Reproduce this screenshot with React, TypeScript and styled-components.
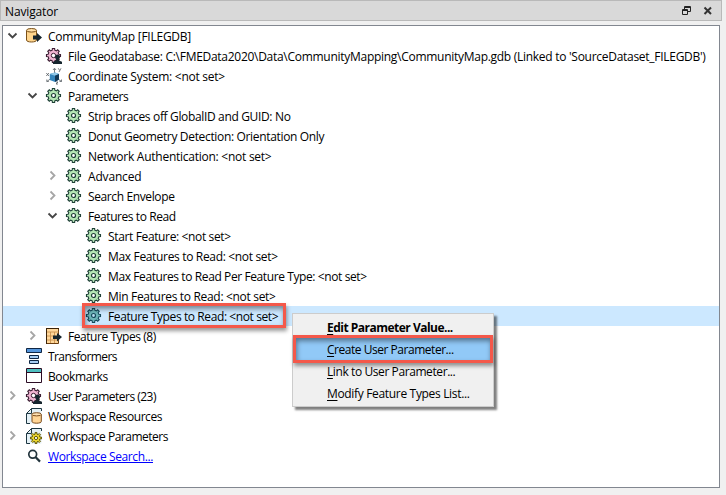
import React from "react";
import styled, { createGlobalStyle, css } from "styled-components";

const GlobalStyle = createGlobalStyle`
  body { margin: 0; background: #f0f0f0; }
  * { box-sizing: border-box; }
`;

const Dock = styled.main`
  position: relative;
  width: 726px;
  height: 495px;
  overflow: hidden;
  background: #f0f0f0;
  color: #000;
  font: 12px/20px "Open Sans", "Noto Sans", sans-serif;
  display: flex;
  flex-direction: column;
`;

const TitleBar = styled.header`
  width: 722px;
  height: 21px;
  flex: none;
  display: flex;
  align-items: center;
  padding: 0 7px 0 4px;
  background: #d9d9d9;
  border: 1px solid #b9b9b9;
`;

const TitleButtons = styled.div`
  display: flex;
  gap: 9px;
  margin-left: auto;
  padding-top: 2px;
  svg { display: block; }
`;

const TreePanel = styled.section`
  width: 718px;
  height: 463px;
  margin: 4px 0 0 2px;
  flex: none;
  background: #fff;
  border: 1px solid #828790;
`;

const Row = styled.div<{ $depth: number; $selected?: boolean }>`
  height: 20px;
  display: flex;
  align-items: center;
  padding-left: ${(p) => p.$depth * 20}px;
  background: ${(p) => (p.$selected ? "#cce8ff" : "transparent")};
`;

const Arrow = styled.span`
  width: 23px;
  height: 20px;
  flex: none;
  svg { display: block; }
`;

const IconCell = styled.span`
  width: 22px;
  height: 16px;
  flex: none;
  svg { display: block; overflow: visible; }
`;

const Label = styled.span<{ $track?: number; $link?: boolean; $bold?: boolean }>`
  white-space: pre;
  padding-top: 2px;
  letter-spacing: ${(p) => p.$track ?? 0}px;
  ${(p) => p.$bold && css`font-weight: 700;`}
  ${(p) => p.$link && css`color: #0000ff; text-decoration: underline;`}
`;

const Menu = styled.div`
  position: absolute;
  left: 292px;
  top: 313px;
  width: 202px;
  height: 94px;
  padding: 2px;
  background: #f0f0f0;
  border: 1px solid #ccc;
  box-shadow: 3px 3px 2px rgba(0, 0, 0, 0.5);
`;

const MenuItem = styled.div<{ $active?: boolean }>`
  height: 22px;
  display: flex;
  align-items: center;
  padding-left: 32px;
  background: ${(p) => (p.$active ? "#91c9f7" : "transparent")};
`;

const Mnemonic = styled.span`
  text-decoration: underline;
  text-underline-offset: 2px;
`;

const Callout = styled.div<{ $x: number; $y: number; $w: number; $h: number }>`
  position: absolute;
  left: ${(p) => p.$x}px;
  top: ${(p) => p.$y}px;
  width: ${(p) => p.$w}px;
  height: ${(p) => p.$h}px;
  border: 3px solid #f4584a;
  box-shadow: 1px 3px 4px rgba(0, 0, 0, 0.4), inset 1px 3px 5px rgba(0, 0, 0, 0.42);
`;

function gearPath(cx: number, cy: number, outer: number, inner: number, teeth = 8) {
  const pts: string[] = [];
  const step = (Math.PI * 2) / teeth;
  for (let i = 0; i < teeth; i++) {
    const a = i * step;
    for (const [o, r] of [[-0.3, inner], [-0.2, outer], [0.2, outer], [0.3, inner]]) {
      pts.push(`${(cx + r * Math.sin(a + o * step)).toFixed(2)} ${(cy - r * Math.cos(a + o * step)).toFixed(2)}`);
    }
  }
  return `M${pts.join("L")}Z`;
}

type IconName = "db" | "userGear" | "coords" | "gear" | "gearSel" | "types" | "transformers" | "bookmarks" | "resources" | "wsParams" | "search";

const Person = () => (
  <path d="M11.500 6.600c1.600 0 2.500 1.100 2.500 2.500 0 1-.4 1.700-1.100 2.200v1.200l3.100 1.300V16H7v-2.200l3.100-1.300v-1.200C9.400 10.800 9 10.100 9 9.100c0-1.400.9-2.500 2.500-2.500z" fill="#16262e" />
);

const Page = () => <path d="M5.500.6H15.400V15.400H.6V5.500z" fill="#e4f0f5" />;

function Icon({ name }: { name: IconName }) {
  return (
    <svg width="16" height="16" viewBox="0 0 16 16">
      {(name === "gear" || name === "gearSel") && (
        <g fill={name === "gear" ? "#b4e6b4" : "#6cb4b8"} stroke={name === "gear" ? "#1f4037" : "#174a5c"}>
          <path d={gearPath(7.5, 7.5, 7.1, 5.5)} strokeWidth="1.1" />
          <circle cx="7.5" cy="7.5" r="2" fill={name === "gear" ? "#fff" : "#b5dcf0"} strokeWidth="1.2" />
        </g>
      )}
      {name === "userGear" && (
        <>
          <g fill="#f0b4d2" stroke="#3c1f33">
            <path d={gearPath(7.5, 7.5, 7.1, 5.5)} strokeWidth="1.1" />
            <circle cx="7.5" cy="7.5" r="2.2" fill="#fff" />
          </g>
          <Person />
        </>
      )}
      {name === "db" && (
        <>
          <path d="M.5 2.500v9.500c0 1.300 2.300 2 5 2s5-.7 5-2V2.500" fill="#ffd58c" stroke="#7a5018" />
          <ellipse cx="5.5" cy="2.300" rx="5" ry="1.800" fill="#ffe0a8" stroke="#7a5018" />
          <path d="M7 7.500h4V5l5 4.500-5 4.500v-2.500H7z" fill="#16262e" />
        </>
      )}
      {name === "coords" && (
        <>
          <path d="M8.500 5V.5M7 2l1.500-1.800L10 2M5 10.500.8 13.500M.8 11.500v2h2M12 11l3.500 2.500M15.500 11.500v2h-2" fill="none" stroke="#6a7075" strokeWidth=".9" />
          <path d="M3.800 6 9 4.500 13 6v5.500L9 14l-5.200-2z" fill="#3686bd" />
          <path d="m3.800 6 5.200-1.500L13 6 9 7.800z" fill="#91c8e8" />
          <path d="M9 7.800 13 6v5.500L9 14z" fill="#113756" />
          <path d="m.3 5 2.600 3M2.900 5 .3 8M12.300.3l1.200 2M15 .3l-2 3.700M10 14h2l-2 2h2" fill="none" stroke="#555b60" strokeWidth=".8" />
        </>
      )}
      {name === "types" && (
        <>
          <path d="M.5.5h12v15H.5z" fill="#ffd79a" stroke="#6b3e11" />
          <path d="M.5 4h12M.5 8h8M.5 12h12M4.500 4v11M8.500 4v11" fill="none" stroke="#c58b48" strokeWidth=".8" />
          <path d="M.5 0v16M0 .5h13" stroke="#3b2308" />
          <path d="M7 7.500h4V5l5 4-5 4.500V11H7z" fill="#16262e" />
        </>
      )}
      {name === "transformers" && (
        <g stroke="#0f2644">
          <path d="M.5.5h15v4H.5z" fill="#5596dc" />
          <path d="M3.500 7.500h9v3h-9zM3.500 12.500h9v3h-9z" fill="#a7cdf2" />
        </g>
      )}
      {name === "bookmarks" && (
        <>
          <path d="M.5.5h15v14H.5z" fill="#fff" stroke="#2b0c24" />
          <path d="M1 1h14v3H1z" fill="#4fbfc0" />
          <path d="M1 4.500h14" stroke="#2b0c24" />
        </>
      )}
      {name === "resources" && (
        <>
          <Page />
          <path d="M4 15.500H.5V5.500l5-5h10V3M5.500.5v5h-5" fill="none" stroke="#1d3742" />
          <path d="M6 6.500v7c0 1 2 1.700 4.600 1.700s4.700-.7 4.700-1.700v-7" fill="#ffd595" stroke="#7a4a1a" />
          <ellipse cx="10.600" cy="6.300" rx="4.700" ry="1.600" fill="#ffe2b3" stroke="#7a4a1a" />
        </>
      )}
      {name === "wsParams" && (
        <>
          <Page />
          <path d="M4 15.500H.5V5.500l5-5h10V3M5.500.5v5h-5" fill="none" stroke="#1d3742" />
          <path d={gearPath(10, 10, 5.6, 4)} fill="#ecd72f" stroke="#5e5508" />
          <circle cx="10" cy="10" r="1.600" fill="#fff" stroke="#5e5508" />
        </>
      )}
      {name === "search" && (
        <>
          <circle cx="6.700" cy="6.300" r="3.900" fill="#fff" stroke="#22343c" strokeWidth="1.700" />
          <path d="m9.700 9.300 4.300 4.300" stroke="#22343c" strokeWidth="2.200" />
        </>
      )}
    </svg>
  );
}

function Chevron({ open }: { open: boolean }) {
  return (
    <svg width="20" height="20" viewBox="0 0 20 20" fill="none" strokeWidth="1.800">
      {open ? <path d="m5.500 7.500 4 4 4-4" stroke="#454545" /> : <path d="m7.500 5.500 4 4-4 4" stroke="#a6a6a6" />}
    </svg>
  );
}

type TreeNode = { d: number; icon: IconName; text: string; track: number; open?: boolean; selected?: boolean; link?: boolean };

const nodes: TreeNode[] = [
  { d: 0, icon: "db", text: "CommunityMap [FILEGDB]", track: -0.248, open: true },
  { d: 1, icon: "userGear", text: "File Geodatabase: C:\\FMEData2020\\Data\\CommunityMapping\\CommunityMap.gdb (Linked to 'SourceDataset_FILEGDB')", track: -0.28 },
  { d: 1, icon: "coords", text: "Coordinate System: <not set>", track: -0.28 },
  { d: 1, icon: "gear", text: "Parameters", track: -0.48, open: true },
  { d: 2, icon: "gear", text: "Strip braces off GlobalID and GUID: No", track: -0.345 },
  { d: 2, icon: "gear", text: "Donut Geometry Detection: Orientation Only", track: -0.335 },
  { d: 2, icon: "gear", text: "Network Authentication: <not set>", track: -0.255 },
  { d: 2, icon: "gear", text: "Advanced", track: -0.17 },
  { d: 2, icon: "gear", text: "Search Envelope", track: -0.38, open: false },
  { d: 2, icon: "gear", text: "Features to Read", track: -0.43, open: true },
  { d: 3, icon: "gear", text: "Start Feature: <not set>", track: -0.36 },
  { d: 3, icon: "gear", text: "Max Features to Read: <not set>", track: -0.335 },
  { d: 3, icon: "gear", text: "Max Features to Read Per Feature Type: <not set>", track: -0.4 },
  { d: 3, icon: "gear", text: "Min Features to Read: <not set>", track: -0.32 },
  { d: 3, icon: "gearSel", text: "Feature Types to Read: <not set>", track: -0.4, selected: true },
  { d: 1, icon: "types", text: "Feature Types (8)", track: -0.45, open: false },
  { d: 0, icon: "transformers", text: "Transformers", track: -0.574 },
  { d: 0, icon: "bookmarks", text: "Bookmarks", track: -0.38 },
  { d: 0, icon: "userGear", text: "User Parameters (23)", track: -0.504, open: false },
  { d: 0, icon: "resources", text: "Workspace Resources", track: -0.442 },
  { d: 0, icon: "wsParams", text: "Workspace Parameters", track: -0.489, open: false },
  { d: 0, icon: "search", text: "Workspace Search...", track: -0.384, link: true },
].map((n) => (n.text === "Advanced" ? { ...n, open: false } : n)) as TreeNode[];

const menu = [
  { text: "Edit Parameter Value...", track: -0.51, bold: true },
  { text: "Create User Parameter...", track: -0.47, active: true },
  { text: "Link to User Parameter...", track: -0.41 },
  { text: "Modify Feature Types List...", track: -0.33 },
];

export default function App() {
  return (
    <Dock>
      <GlobalStyle />
      <TitleBar>
        <Label $track={-0.15}>Navigator</Label>
        <TitleButtons>
          <svg width="13" height="12" viewBox="0 0 13 12" fill="none" stroke="#222" strokeWidth="1">
            <path d="M4.500 4V.5h6v5H8M4.500 1.500h6M2.500 3.500h5v5h-5zM2.500 4.500h5" />
          </svg>
          <svg width="12" height="12" viewBox="0 0 12 12" stroke="#333" strokeWidth="2">
            <path d="m2.500 1.500 6.500 6.500M9 1.500 2.500 8" />
          </svg>
        </TitleButtons>
      </TitleBar>
      <TreePanel>
        {nodes.map((n) => (
          <Row key={n.text} $depth={n.d} $selected={n.selected}>
            <Arrow>{n.open !== undefined && <Chevron open={n.open} />}</Arrow>
            <IconCell><Icon name={n.icon} /></IconCell>
            <Label $track={n.track} $link={n.link}>{n.text}</Label>
          </Row>
        ))}
      </TreePanel>
      <Menu>
        {menu.map((m) => (
          <MenuItem key={m.text} $active={m.active}>
            <Label $bold={m.bold} $track={m.track}><Mnemonic>{m.text[0]}</Mnemonic>{m.text.slice(1)}</Label>
          </MenuItem>
        ))}
      </Menu>
      <Callout $x={82} $y={303} $w={204} $h={25} />
      <Callout $x={293} $y={335} $w={200} $h={28} />
    </Dock>
  );
}
